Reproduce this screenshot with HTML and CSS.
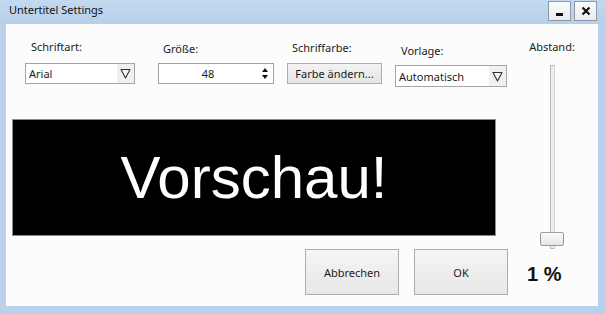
FILE: index.html
```html
<!DOCTYPE html>
<html lang="de">
<head>
<meta charset="utf-8">
<title>Untertitel Settings</title>
<link rel="stylesheet" href="styles.css">
</head>
<body>
<div class="window">
  <div class="titlebar">
    <span class="title">Untertitel Settings</span>
    <div class="caption">
      <div class="cap"><span class="min-glyph"></span></div>
      <div class="cap">
        <svg width="10" height="10" viewBox="0 0 10 10"><path d="M1.5 1.5 L8.5 8.5 M8.5 1.5 L1.5 8.5" stroke="#111" stroke-width="2.2" fill="none"/></svg>
      </div>
    </div>
  </div>
  <div class="client">
    <div class="main">
      <div class="controls">
        <div class="group g-font">
          <span class="lbl">Schriftart:</span>
          <div class="combo">
            <span class="combo-text">Arial</span>
            <span class="drop"><svg width="11" height="11" viewBox="0 0 11 11"><path d="M1 1.5 H10 L5.5 10 Z" fill="#f4f4f4" stroke="#333" stroke-width="1.1" stroke-linejoin="round"/></svg></span>
          </div>
        </div>
        <div class="group g-size">
          <span class="lbl">Größe:</span>
          <div class="spin">
            <span class="val">48</span>
            <span class="arrows">
              <svg width="6" height="4" viewBox="0 0 6 4"><path d="M0 4 L3 0 L6 4 Z" fill="#111"/></svg>
              <svg width="6" height="4" viewBox="0 0 6 4"><path d="M0 0 L6 0 L3 4 Z" fill="#111"/></svg>
            </span>
          </div>
        </div>
        <div class="group g-color">
          <span class="lbl">Schriffarbe:</span>
          <div class="btn">Farbe ändern...</div>
        </div>
        <div class="group g-tpl">
          <span class="lbl">Vorlage:</span>
          <div class="combo tall">
            <span class="combo-text">Automatisch</span>
            <span class="drop"><svg width="11" height="11" viewBox="0 0 11 11"><path d="M1 1.5 H10 L5.5 10 Z" fill="#f4f4f4" stroke="#333" stroke-width="1.1" stroke-linejoin="round"/></svg></span>
          </div>
        </div>
      </div>
      <div class="preview">Vorschau!</div>
      <div class="actions">
        <div class="big-btn">Abbrechen</div>
        <div class="big-btn">OK</div>
      </div>
    </div>
    <div class="side">
      <span class="lbl">Abstand:</span>
      <div class="slider">
        <div class="track"></div>
        <div class="thumb"></div>
      </div>
      <div class="pct">1 %</div>
    </div>
  </div>
</div>
</body>
</html>
```
FILE: styles.css
```css
* { box-sizing: border-box; }
body {
  margin: 0;
  font-family: "Noto Sans", "Open Sans", sans-serif;
  font-size: 11px;
  color: #1b1b1b;
}
.window {
  width: 605px;
  height: 314px;
  background: #b9d1ea;
  display: flex;
  flex-direction: column;
}
.titlebar {
  height: 24px;
  flex: none;
  display: flex;
  background: linear-gradient(#c4d9f0, #b8cfea);
}
.title {
  padding: 2px 0 0 9px;
  line-height: 15px;
  font-size: 11px;
  color: #111;
}
.caption {
  margin-left: auto;
  display: flex;
  gap: 3px;
  padding: 1px 8px 0 0;
}
.cap {
  width: 23px;
  height: 20px;
  border: 1px solid #8d99a6;
  background: linear-gradient(#fbfcfd, #e8ecf0);
  display: flex;
  align-items: center;
  justify-content: center;
}
.min-glyph {
  width: 7px;
  height: 3px;
  background: #111;
  margin-top: 6px;
}
.client {
  flex: 1;
  margin: 0 7px 8px 6px;
  background: #fcfcfc;
  display: flex;
}
.main {
  width: 514px;
  flex: none;
  display: flex;
  flex-direction: column;
}
.controls {
  display: flex;
  align-items: flex-start;
  padding: 15px 0 0 19px;
  height: 63px;
}
.group {
  display: flex;
  flex-direction: column;
}
.lbl {
  display: block;
  line-height: 15px;
  height: 15px;
  white-space: nowrap;
}
.group .lbl {
  padding-left: 6px;
  margin-bottom: 9px;
}
.g-font { width: 110px; }
.g-size { width: 116px; margin-left: 23px; }
.g-size .lbl { height: 17px; padding-top: 2px; margin-bottom: 7px; padding-left: 5px; }
.g-color { width: 95px; margin-left: 13px; }
.g-color .lbl { height: 16px; padding-top: 1px; margin-bottom: 8px; padding-left: 5px; }
.g-tpl { width: 112px; margin-left: 13px; }
.g-tpl .lbl { height: 19px; padding-top: 4px; margin-bottom: 7px; }
.combo {
  height: 21px;
  border: 1px solid #a5a5a5;
  background: #fff;
  display: flex;
  align-items: center;
  padding-left: 3px;
}
.combo.tall { height: 22px; }
.combo-text { line-height: 15px; }
.drop {
  margin-left: auto;
  width: 17px;
  align-self: stretch;
  background: #f0f0f0;
  display: flex;
  align-items: center;
  justify-content: center;
}
.spin {
  height: 21px;
  border: 1px solid #a5a5a5;
  background: #fff;
  display: flex;
  align-items: center;
}
.spin .val {
  flex: 1;
  text-align: center;
  line-height: 15px;
}
.arrows {
  width: 16px;
  display: flex;
  flex-direction: column;
  align-items: center;
  gap: 3px;
}
.arrows svg { display: block; }
.btn {
  height: 21px;
  border: 1px solid #acacac;
  background: linear-gradient(#f3f3f3, #e5e5e5);
  text-align: center;
  line-height: 19px;
  white-space: nowrap;
}
.preview {
  margin: 32px 0 0 6px;
  width: 484px;
  height: 117px;
  background: #000;
  border: 1px solid #8c8c8c;
  color: #fff;
  font-family: "Liberation Sans", Arial, sans-serif;
  font-size: 60px;
  display: flex;
  align-items: center;
  justify-content: center;
}
.actions {
  display: flex;
  gap: 15px;
  margin-top: 13px;
  padding-left: 299px;
}
.big-btn {
  width: 94px;
  height: 46px;
  border: 1px solid #adadad;
  background: linear-gradient(#f5f5f5, #e7e7e7);
  display: flex;
  align-items: center;
  justify-content: center;
}
.side {
  width: 64px;
  flex: none;
  display: flex;
  flex-direction: column;
  align-items: center;
  padding-top: 15px;
}
.slider {
  position: relative;
  margin-top: 11px;
  width: 24px;
  height: 184px;
  display: flex;
  justify-content: center;
}
.track {
  width: 5px;
  height: 100%;
  border: 1px solid #b9b9b9;
  border-right-color: #d6d6d6;
  background: #eeeeee;
}
.thumb {
  position: absolute;
  left: 0;
  bottom: 3px;
  width: 24px;
  height: 14px;
  border: 1px solid #9b9b9b;
  border-radius: 2px;
  background: linear-gradient(#fbfbfb, #e5e5e5);
}
.pct {
  align-self: flex-start;
  margin: 14px 0 0 7px;
  font-family: "Liberation Sans", Arial, sans-serif;
  font-weight: bold;
  font-size: 20px;
  line-height: 23px;
  color: #111;
  white-space: nowrap;
}
```
